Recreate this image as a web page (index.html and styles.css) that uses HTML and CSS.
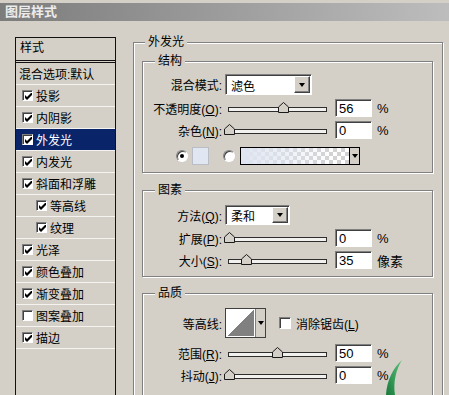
FILE: index.html
```html
<!DOCTYPE html>
<html lang="zh-CN">
<head>
    <meta charset="UTF-8">
    <title>图层样式</title>
    <link rel="stylesheet" href="styles.css">
</head>
<body>
    <div class="titlebar">图层样式</div>

    <div class="main">
        <div class="sidebar">
            <div class="side-head">样式</div>
            <div class="side-row plain">混合选项:默认</div>
            <div class="side-row"><span class="cb"><svg viewBox="0 0 7 7"><polygon points="0,2 2,4 7,-1 7,2 2,7 0,5"/></svg></span>投影</div>
            <div class="side-row"><span class="cb"><svg viewBox="0 0 7 7"><polygon points="0,2 2,4 7,-1 7,2 2,7 0,5"/></svg></span>内阴影</div>
            <div class="side-row sel"><span class="cb"><svg viewBox="0 0 7 7"><polygon points="0,2 2,4 7,-1 7,2 2,7 0,5"/></svg></span>外发光</div>
            <div class="side-row"><span class="cb"><svg viewBox="0 0 7 7"><polygon points="0,2 2,4 7,-1 7,2 2,7 0,5"/></svg></span>内发光</div>
            <div class="side-row"><span class="cb"><svg viewBox="0 0 7 7"><polygon points="0,2 2,4 7,-1 7,2 2,7 0,5"/></svg></span>斜面和浮雕</div>
            <div class="side-row sub"><span class="cb"><svg viewBox="0 0 7 7"><polygon points="0,2 2,4 7,-1 7,2 2,7 0,5"/></svg></span>等高线</div>
            <div class="side-row sub"><span class="cb"><svg viewBox="0 0 7 7"><polygon points="0,2 2,4 7,-1 7,2 2,7 0,5"/></svg></span>纹理</div>
            <div class="side-row"><span class="cb"><svg viewBox="0 0 7 7"><polygon points="0,2 2,4 7,-1 7,2 2,7 0,5"/></svg></span>光泽</div>
            <div class="side-row"><span class="cb"><svg viewBox="0 0 7 7"><polygon points="0,2 2,4 7,-1 7,2 2,7 0,5"/></svg></span>颜色叠加</div>
            <div class="side-row"><span class="cb"><svg viewBox="0 0 7 7"><polygon points="0,2 2,4 7,-1 7,2 2,7 0,5"/></svg></span>渐变叠加</div>
            <div class="side-row"><span class="cb"></span>图案叠加</div>
            <div class="side-row"><span class="cb"><svg viewBox="0 0 7 7"><polygon points="0,2 2,4 7,-1 7,2 2,7 0,5"/></svg></span>描边</div>
        </div>

        <fieldset class="group outer">
            <legend>外发光</legend>

            <fieldset class="group inner structure">
                <legend>结构</legend>
                <div class="row row-select">
                    <span class="lbl">混合模式:</span>
                    <div class="select blend"><span class="select-text">滤色</span><span class="drop"></span></div>
                </div>
                <div class="row row-slider">
                    <span class="lbl">不透明度(<u>O</u>):</span>
                    <div class="slider"><div class="track"><svg class="thumb" style="left:56%" viewBox="0 0 11 11"><polygon points="0.5,10.5 0.5,5 5.5,0.5 10.5,5 10.5,10.5"/></svg></div></div>
                    <span class="num">56</span>
                    <span class="unit">%</span>
                </div>
                <div class="row row-slider">
                    <span class="lbl">杂色(<u>N</u>):</span>
                    <div class="slider"><div class="track"><svg class="thumb" style="left:0%" viewBox="0 0 11 11"><polygon points="0.5,10.5 0.5,5 5.5,0.5 10.5,5 10.5,10.5"/></svg></div></div>
                    <span class="num">0</span>
                    <span class="unit">%</span>
                </div>
                <div class="row row-color">
                    <span class="radio on"></span>
                    <span class="swatch"></span>
                    <span class="radio second"></span>
                    <div class="gradient"><span class="grad-fill"></span><span class="grad-drop"></span></div>
                </div>
            </fieldset>

            <fieldset class="group inner elements">
                <legend>图素</legend>
                <div class="row row-method">
                    <span class="lbl">方法(<u>Q</u>):</span>
                    <div class="select method"><span class="select-text">柔和</span><span class="drop"></span></div>
                </div>
                <div class="row row-slider">
                    <span class="lbl">扩展(<u>P</u>):</span>
                    <div class="slider"><div class="track"><svg class="thumb" style="left:0%" viewBox="0 0 11 11"><polygon points="0.5,10.5 0.5,5 5.5,0.5 10.5,5 10.5,10.5"/></svg></div></div>
                    <span class="num">0</span>
                    <span class="unit">%</span>
                </div>
                <div class="row row-slider">
                    <span class="lbl">大小(<u>S</u>):</span>
                    <div class="slider"><div class="track"><svg class="thumb" style="left:18%" viewBox="0 0 11 11"><polygon points="0.5,10.5 0.5,5 5.5,0.5 10.5,5 10.5,10.5"/></svg></div></div>
                    <span class="num">35</span>
                    <span class="unit">像素</span>
                </div>
            </fieldset>

            <fieldset class="group inner quality">
                <legend>品质</legend>
                <div class="row row-contour">
                    <span class="lbl">等高线:</span>
                    <div class="contour"><span class="contour-img"></span><span class="contour-drop"></span></div>
                    <span class="cb aa"></span>
                    <span>消除锯齿(<u>L</u>)</span>
                </div>
                <div class="row row-slider range">
                    <span class="lbl">范围(<u>R</u>):</span>
                    <div class="slider"><div class="track"><svg class="thumb" style="left:49%" viewBox="0 0 11 11"><polygon points="0.5,10.5 0.5,5 5.5,0.5 10.5,5 10.5,10.5"/></svg></div></div>
                    <span class="num">50</span>
                    <span class="unit">%</span>
                </div>
                <div class="row row-slider">
                    <span class="lbl">抖动(<u>J</u>):</span>
                    <div class="slider"><div class="track"><svg class="thumb" style="left:0%" viewBox="0 0 11 11"><polygon points="0.5,10.5 0.5,5 5.5,0.5 10.5,5 10.5,10.5"/></svg></div></div>
                    <span class="num">0</span>
                    <span class="unit">%</span>
                </div>
            </fieldset>
        </fieldset>
    </div>

    <svg class="leaf" viewBox="0 0 30 40">
        <defs>
            <linearGradient id="leafGrad" x1="0" y1="1" x2="1" y2="0">
                <stop offset="0" stop-color="#17793a"/>
                <stop offset="1" stop-color="#5cc27c"/>
            </linearGradient>
        </defs>
        <path d="M17 5 C8 13 2 25 1 40 L10 40 C8 27 11 15 17 5 Z" fill="url(#leafGrad)"/>
    </svg>
</body>
</html>
```

FILE: styles.css
```css
* {
    margin: 0;
    padding: 0;
    box-sizing: border-box;
}

body {
    width: 449px;
    height: 395px;
    overflow: hidden;
    position: relative;
    background: #d4d0c8;
    color: #000;
    font-family: "Liberation Sans", "Noto Sans CJK SC", sans-serif;
    font-size: 12px;
}

.titlebar {
    margin-top: 3px;
    height: 18px;
    padding-left: 5px;
    background: linear-gradient(to right, #7c7c7c, #bdbdbd);
    color: #ececec;
    font-weight: bold;
    font-size: 13px;
    line-height: 18px;
}

.main {
    display: flex;
    align-items: flex-start;
}

/* Style list */
.sidebar {
    margin: 16px 0 0 15px;
    width: 101px;
    height: 358px;
    border: 1px solid #111;
    border-bottom: 0;
}

.side-head {
    height: 25px;
    line-height: 21px;
    padding-left: 4px;
    border-bottom: 3px double #111;
}

.side-row {
    display: flex;
    align-items: center;
    height: 22px;
    padding-left: 6px;
    border-bottom: 1px solid #f4f3f0;
}

.side-row.plain {
    padding-left: 3px;
}

.side-row.sub {
    padding-left: 20px;
}

.side-row.sel {
    background: #0a246a;
    color: #fff;
}

.cb {
    display: flex;
    align-items: center;
    justify-content: center;
    flex: none;
    width: 11px;
    height: 11px;
    margin-right: 3px;
    background: #fff;
    border: 1px solid;
    border-color: #808080 #fff #fff #808080;
    box-shadow: inset 1px 1px 0 #404040;
}

.cb svg {
    width: 7px;
    height: 7px;
    margin: 1px 0 0 1px;
    fill: #000;
}

/* Group boxes */
.group {
    border: 1px solid #808080;
    box-shadow: inset 1px 1px 0 #fff, 1px 1px 0 #fff;
    min-width: 0;
}

.group legend {
    padding: 0 3px;
    line-height: 14px;
    background: #d4d0c8;
}

.outer {
    margin: 14px 0 0 17px;
    width: 310px;
    height: 360px;
    padding: 0 9px 0 8px;
    border-bottom: 0;
    overflow: hidden;
}

.outer > legend {
    margin-left: 3px;
}

.inner {
    padding: 0 0 7px 0;
}

.inner > legend {
    margin-left: 12px;
}

.structure {
    margin-top: 5px;
}

.elements {
    margin-top: 10px;
}

.quality {
    margin-top: 9px;
    height: 120px;
}

.row {
    display: flex;
    align-items: center;
    margin-top: 4px;
    height: 18px;
}

.lbl {
    flex: none;
    width: 79px;
    margin-right: 3px;
    text-align: right;
    white-space: nowrap;
}

.row-select {
    margin-top: 6px;
    height: 21px;
}

.row-method {
    margin-top: 8px;
    height: 20px;
}

.row-color {
    margin-top: 8px;
    padding-left: 33px;
}

.row-contour {
    margin-top: 8px;
    height: 30px;
}

.range {
    margin-top: 6px;
}

/* Dropdowns */
.select {
    display: flex;
    height: 100%;
    background: #fff;
    border: 1px solid;
    border-color: #808080 #fff #fff #808080;
    box-shadow: inset 1px 1px 0 #404040;
}

.select.blend {
    width: 87px;
}

.select.method {
    width: 65px;
}

.select-text {
    flex: 1;
    padding: 1px 0 0 5px;
    display: flex;
    align-items: center;
}

.drop {
    display: flex;
    align-items: center;
    justify-content: center;
    width: 16px;
    margin: 1px 1px 1px 0;
    background: #d4d0c8;
    border: 1px solid;
    border-color: #fff #404040 #404040 #fff;
    box-shadow: inset -1px -1px 0 #808080;
}

.drop::after,
.grad-drop::after,
.contour-drop::after {
    content: "";
    border-left: 3px solid transparent;
    border-right: 3px solid transparent;
    border-top: 4px solid #000;
}

/* Sliders */
.slider {
    flex: none;
    width: 105px;
    padding: 0 3px;
}

.track {
    position: relative;
    height: 5px;
    margin-top: 3px;
    background: #f2f1ee;
    border: 1px solid #2e2e2e;
}

.thumb {
    position: absolute;
    top: -6px;
    width: 11px;
    height: 11px;
    margin-left: -5px;
    fill: #d4d0c8;
    stroke: #1a1a1a;
    stroke-width: 1;
}

.num {
    flex: none;
    width: 37px;
    height: 18px;
    margin-left: 5px;
    padding: 1px 0 0 3px;
    line-height: 16px;
    font-size: 13px;
    background: #fff;
    border: 1px solid;
    border-color: #808080 #fff #fff #808080;
    box-shadow: inset 1px 1px 0 #404040;
}

.unit {
    margin-left: 5px;
    font-size: 13px;
}

/* Colour choice */
.radio {
    position: relative;
    flex: none;
    width: 12px;
    height: 12px;
    border-radius: 50%;
    background: #fff;
    border: 1px solid;
    border-color: #808080 #fff #fff #808080;
    box-shadow: inset 1px 1px 0 #404040;
}

.radio.on::after {
    content: "";
    position: absolute;
    left: 3px;
    top: 3px;
    width: 4px;
    height: 4px;
    border-radius: 50%;
    background: #000;
}

.radio.second {
    margin-left: 14px;
}

.swatch {
    width: 17px;
    height: 18px;
    margin-left: 4px;
    background: #e0e6f2;
    border: 1px solid #b9bdc6;
}

.gradient {
    display: flex;
    width: 120px;
    height: 18px;
    margin-left: 5px;
    border: 1px solid #000;
}

.grad-fill {
    flex: 1;
    background: linear-gradient(to right, #dfe5f1 0%, rgba(223, 229, 241, 0.6) 40%, rgba(223, 229, 241, 0) 85%),
                repeating-conic-gradient(#d2d2d2 0 25%, #fff 0 50%) 0 0 / 8px 8px;
}

.grad-drop {
    display: flex;
    align-items: center;
    justify-content: center;
    width: 10px;
    background: #d4d0c8;
    border-left: 1px solid #000;
}

/* Contour */
.contour {
    display: flex;
    width: 41px;
    height: 30px;
    border: 1px solid #404040;
    background: #d4d0c8;
}

.contour-img {
    width: 29px;
    border: 1px solid #fff;
    background: linear-gradient(to top left, #808080 50%, #fff 50%);
}

.contour-drop {
    flex: 1;
    display: flex;
    align-items: center;
    justify-content: center;
    border-left: 1px solid #808080;
}

.cb.aa {
    margin-left: 13px;
    margin-right: 5px;
    width: 12px;
    height: 12px;
}

.leaf {
    position: absolute;
    left: 385px;
    top: 355px;
    width: 30px;
    height: 40px;
}
```
